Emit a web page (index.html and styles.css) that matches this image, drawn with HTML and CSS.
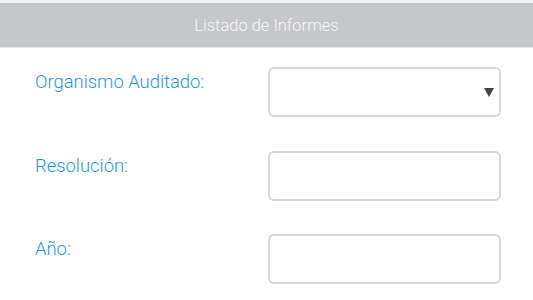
FILE: index.html
```html
<!DOCTYPE html>
<html lang="es">
<head>
<meta charset="utf-8">
<title>Listado de Informes</title>
<link rel="stylesheet" href="styles.css">
</head>
<body>
<header class="title-bar">Listado de Informes</header>
<form class="filters">
  <label class="field-label" for="organismo">Organismo Auditado:</label>
  <div class="select-wrap">
    <select id="organismo" class="field-input"></select>
    <svg class="select-arrow" width="10" height="9" viewBox="0 0 10 9" aria-hidden="true"><polygon points="0,0 10,0 5,9" fill="#444"/></svg>
  </div>
  <label class="field-label" for="resolucion">Resolución:</label>
  <input id="resolucion" class="field-input" type="text">
  <label class="field-label" for="anio">Año:</label>
  <input id="anio" class="field-input" type="text">
</form>
</body>
</html>
```
FILE: styles.css
```css
html, body {
  margin: 0;
  padding: 0;
  background: #ffffff;
  font-family: Roboto, "Liberation Sans", sans-serif;
}
body {
  border-top: 3px solid #eeeeef;
}
.title-bar {
  height: 45px;
  background: #c6c7c9;
  color: #f6f6f7;
  font-size: 16.5px;
  font-weight: 300;
  display: flex;
  align-items: center;
  justify-content: center;
  border-bottom: 1px solid #e4e5e6;
  box-sizing: border-box;
}
.filters {
  display: grid;
  grid-template-columns: 233px 233px;
  row-gap: 33.5px;
  padding: 19px 0 0 35px;
}
.field-label {
  color: #2196f3;
  font-size: 18.4px;
  font-weight: 300;
  line-height: 20px;
  padding-top: 5px;
}
.select-wrap {
  position: relative;
}
.field-input {
  display: block;
  width: 233px;
  height: 50px;
  box-sizing: border-box;
  border: 2px solid #d6d6d6;
  border-radius: 6px;
  background: #ffffff;
  margin: 0;
  font: inherit;
  appearance: none;
  -webkit-appearance: none;
  outline: none;
}
.select-arrow {
  position: absolute;
  right: 7px;
  top: 21px;
  pointer-events: none;
}
```
